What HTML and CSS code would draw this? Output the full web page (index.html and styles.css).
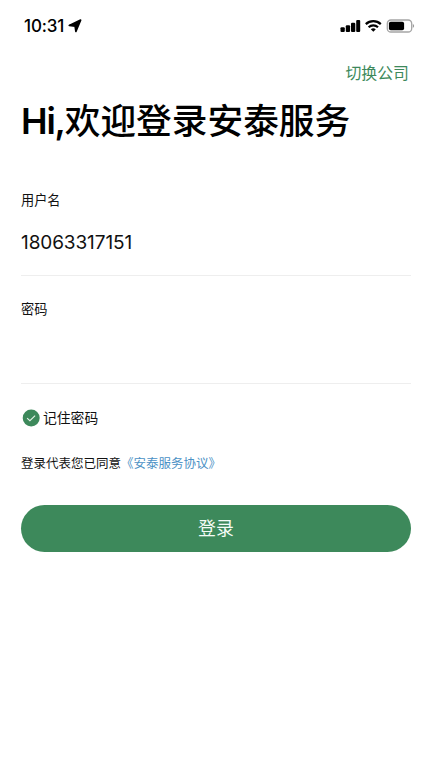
FILE: index.html
```html
<!DOCTYPE html>
<html lang="zh-CN">
<head>
<meta charset="utf-8">
<title>登录</title>
<link rel="stylesheet" href="styles.css">
</head>
<body>
<header class="status">
  <div class="status-left">
    <span class="time">10:31</span>
    <svg width="14" height="14" viewBox="0 0 14 14"><path d="M12.6 1.1 7.9 12.4 7.1 7.1 1.3 6.4Z" fill="#000" stroke="#000" stroke-width="1.7" stroke-linejoin="round"/></svg>
  </div>
  <div class="status-right">
    <svg width="75" height="14" viewBox="0 0 75 14">
      <rect x=".5" y="8.2" width="4.3" height="4.8" rx="1.1"/>
      <rect x="5.8" y="6.2" width="4.3" height="6.8" rx="1.1"/>
      <rect x="11" y="3.8" width="4.3" height="9.2" rx="1.1"/>
      <rect x="16.2" y="1" width="4" height="12" rx="1.1"/>
      <g fill="none" stroke="#000" stroke-width="2.2">
        <path d="M25.8 5.1a11 11 0 0 1 15 0"/>
        <path d="M28.6 8.2a7 7 0 0 1 9.4 0"/>
      </g>
      <path d="M33.3 12.8 30.8 10.3a3.8 3.8 0 0 1 5 0Z"/>
      <rect x="47.3" y="1" width="24.4" height="12" rx="3.6" fill="none" stroke="#a5a5a5" stroke-width="1.3"/>
      <rect x="48.9" y="2.7" width="15.2" height="8.6" rx="1.8"/>
      <path d="M72.8 5.1c1.8.6 1.8 3.2 0 3.8Z" fill="#999"/>
    </svg>
  </div>
</header>
<main class="login">
  <a class="switch">切换公司</a>
  <h1 class="title"><span class="hi">Hi,</span>欢迎登录安泰服务</h1>
  <section class="field">
    <div class="label">用户名</div>
    <div class="value">18063317151</div>
  </section>
  <section class="field password">
    <div class="label">密码</div>
    <div class="value"></div>
  </section>
  <div class="remember">
    <svg width="18" height="18" viewBox="0 0 18 18"><circle cx="9.2" cy="9" r="8.5" fill="#3d895b"/><path d="m5.1 9.1 2.8 2.6 5.2-5.1" fill="none" stroke="#e5f3e9" stroke-width="1.1"/></svg>
    <span>记住密码</span>
  </div>
  <p class="agreement">登录代表您已同意<a class="link">《安泰服务协议》</a></p>
  <button class="submit">登录</button>
</main>
</body>
</html>
```
FILE: styles.css
```css
* {
  box-sizing: border-box;
}

body {
  margin: 0;
  background: #fff;
  color: #111;
  font-family: Inter, "Noto Sans CJK SC", sans-serif;
}

svg {
  display: block;
}

.status {
  display: flex;
  justify-content: space-between;
  align-items: center;
  height: 52px;
  padding: 0 17px 0 24px;
  color: #000;
}

.status-left {
  display: flex;
  align-items: center;
  gap: 4px;
}

.time {
  font-size: 17px;
  font-weight: 550;
  line-height: 20px;
  letter-spacing: -0.15px;
}

.login {
  display: flex;
  flex-direction: column;
  padding: 0 21px;
}

.switch {
  align-self: flex-end;
  height: 24px;
  margin: 10px 2px 0 0;
  color: #3d895b;
  font-size: 15.9px;
  line-height: 24px;
}

.title {
  height: 52px;
  margin: 9px 0 0;
  color: #000;
  font-size: 35.7px;
  font-weight: 500;
  line-height: 52px;
  white-space: nowrap;
}

.hi {
  font-weight: 600;
  letter-spacing: -1.2px;
}

.field {
  height: 86px;
  margin-top: 43px;
  border-bottom: 1px solid #eee;
}

.label {
  font-size: 13.2px;
  line-height: 20px;
}

.value {
  margin-top: 20px;
  font-size: 19px;
  line-height: 26px;
  letter-spacing: -0.1px;
}

.password {
  height: 85px;
  margin-top: 23px;
}

.remember {
  display: flex;
  align-items: center;
  gap: 3px;
  height: 20px;
  margin: 24px 0 0 1px;
  font-size: 13.8px;
  line-height: 20px;
}

.agreement {
  height: 20px;
  margin: 26px 0 0;
  font-size: 12.5px;
  line-height: 20px;
  white-space: nowrap;
}

.link {
  color: #4b91c5;
}

.submit {
  height: 47px;
  margin-top: 31px;
  padding: 0;
  border: 0;
  border-radius: 24px;
  background: #3d895b;
  color: #f4fbf6;
  font-family: inherit;
  font-size: 17.9px;
  line-height: 47px;
}
```
